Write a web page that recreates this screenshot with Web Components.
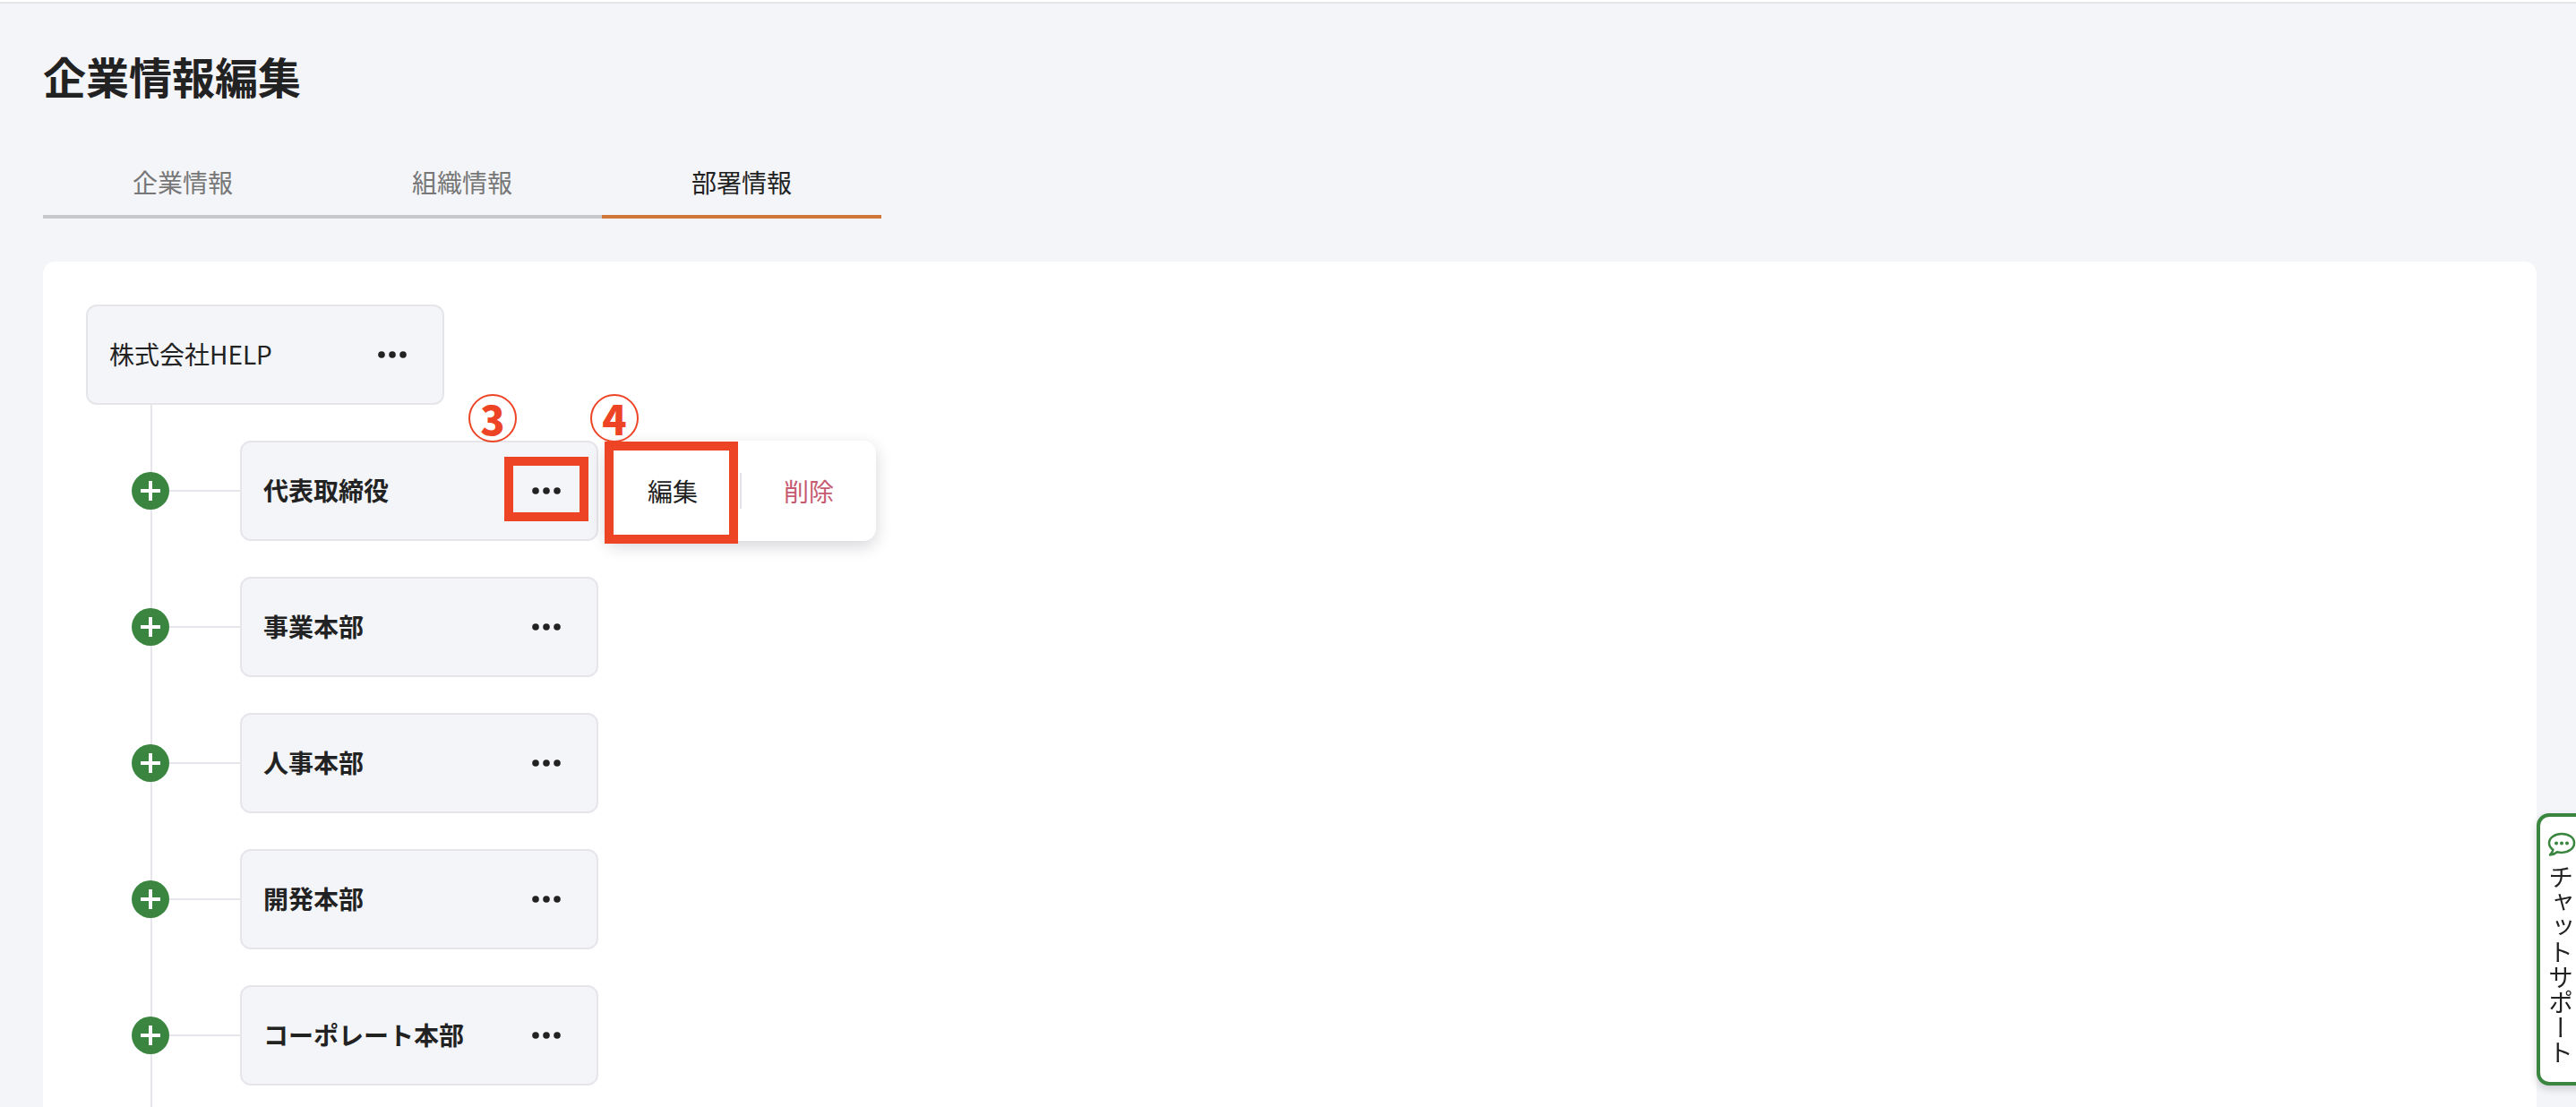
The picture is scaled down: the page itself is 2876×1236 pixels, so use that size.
<!DOCTYPE html>
<html lang="ja">
<head>
<meta charset="utf-8">
<title>企業情報編集</title>
<style>
  html, body { margin: 0; height: 100%; overflow: hidden; }
  body {
    background: #f4f5f9;
    color: #222;
    font-family: "Noto Sans CJK JP", "Noto Sans", sans-serif;
    border-top: 2px solid #fff;
    box-sizing: border-box;
  }
</style>
</head>
<body>

<company-edit-page heading="企業情報編集">
  <tab-bar slot="tabs">
    <tab-item>企業情報</tab-item>
    <tab-item>組織情報</tab-item>
    <tab-item active>部署情報</tab-item>
  </tab-bar>

  <dept-tree root="株式会社HELP">
    <dept-row>
      代表取締役
      <mark-box slot="marks" style="left:293px;top:16px;width:94px;height:72px"></mark-box>
      <mark-number slot="marks" style="left:253px;top:-54px">3</mark-number>
      <action-menu slot="marks"></action-menu>
      <mark-number slot="marks" style="left:389px;top:-54px">4</mark-number>
    </dept-row>
    <dept-row>事業本部</dept-row>
    <dept-row>人事本部</dept-row>
    <dept-row>開発本部</dept-row>
    <dept-row>コーポレート本部</dept-row>
  </dept-tree>
</company-edit-page>

<chat-support>チャットサポート</chat-support>

<script>
const dotsIcon = `
  <svg width="32" height="8" viewBox="0 0 32 8" fill="#222" aria-hidden="true">
    <circle cx="4" cy="4" r="3.8"/><circle cx="16" cy="4" r="3.8"/><circle cx="28" cy="4" r="3.8"/>
  </svg>`;

// Page shell: title, tabs and the white card
class CompanyEditPage extends HTMLElement {
  constructor() {
    super();
    this.attachShadow({ mode: 'open' });
  }
  connectedCallback() {
    this.shadowRoot.innerHTML = `
      <style>
        :host {
          display: flex; flex-direction: column; box-sizing: border-box; height: 100%;
          border-top: 2px solid #e6e6ea; padding: 44px 44px 0 48px;
        }
        h1 { margin: 0 0 63px; font-size: 48px; line-height: 72px; font-weight: 700; color: #222; }
        .card {
          flex: 1; min-height: 0; overflow: hidden;
          margin-top: 48px; padding: 48px 48px 0;
          background: #fff; border-radius: 14px 14px 0 0;
        }
      </style>
      <h1>${this.getAttribute('heading')}</h1>
      <slot name="tabs"></slot>
      <div class="card"><slot></slot></div>
    `;
  }
}

class TabBar extends HTMLElement {
  constructor() {
    super();
    this.attachShadow({ mode: 'open' });
    this.shadowRoot.innerHTML = `
      <style>:host { display: flex; }</style>
      <slot></slot>
    `;
  }
}

class TabItem extends HTMLElement {
  constructor() {
    super();
    this.attachShadow({ mode: 'open' });
    this.shadowRoot.innerHTML = `
      <style>
        :host {
          display: block; width: 312px; text-align: center;
          font-size: 28px; line-height: 40px; padding-bottom: 17px;
          color: #777; border-bottom: 4px solid #c8c8cc;
        }
        :host([active]) { color: #222; border-bottom-color: #d2773a; }
      </style>
      <slot></slot>
    `;
  }
}

// Root node plus the list hanging off the vertical line
class DeptTree extends HTMLElement {
  constructor() {
    super();
    this.attachShadow({ mode: 'open' });
  }
  connectedCallback() {
    this.shadowRoot.innerHTML = `
      <style>
        :host { display: block; }
        .root {
          display: flex; align-items: center; justify-content: space-between;
          box-sizing: border-box; width: 400px; height: 112px;
          padding: 0 40px 0 24px;
          background: #f4f5f9; border: 2px solid #e6e6ea; border-radius: 12px;
          font-size: 28px; color: #222;
        }
        .root svg { display: block; }
        .root span { padding-bottom: 2px; }
        .list {
          margin-left: 72px; border-left: 2px solid #e6e6ea;
          padding: 40px 0 60px;
          display: flex; flex-direction: column; gap: 40px;
        }
      </style>
      <div class="root"><span>${this.getAttribute('root')}</span>${dotsIcon}</div>
      <div class="list"><slot></slot></div>
    `;
  }
}

class DeptRow extends HTMLElement {
  constructor() {
    super();
    this.attachShadow({ mode: 'open' });
    this.shadowRoot.innerHTML = `
      <style>
        :host { display: flex; align-items: center; margin-left: -23px; }
        .add { display: block; flex: none; }
        .line { flex: none; width: 79px; height: 2px; background: #e6e6ea; }
        .node {
          position: relative;
          display: flex; align-items: center; justify-content: space-between;
          box-sizing: border-box; width: 400px; height: 112px;
          padding: 0 40px 0 24px;
          background: #f4f5f9; border: 2px solid #e6e6ea; border-radius: 12px;
          font-size: 28px; font-weight: 700; color: #222;
        }
        .node > span { padding-bottom: 2px; }
        .node > svg { display: block; }
      </style>
      <svg class="add" width="42" height="42" viewBox="0 0 42 42" aria-hidden="true">
        <circle cx="21" cy="21" r="21" fill="#3a853f"/>
        <path d="M10 21h22M21 10v22" stroke="#fff" stroke-width="4"/>
      </svg>
      <div class="line"></div>
      <div class="node">
        <span><slot></slot></span>
        ${dotsIcon}
        <slot name="marks"></slot>
      </div>
    `;
  }
}

// Edit / delete popup next to the first node
class ActionMenu extends HTMLElement {
  constructor() {
    super();
    this.attachShadow({ mode: 'open' });
    this.shadowRoot.innerHTML = `
      <style>
        :host {
          position: absolute; left: 406px; top: -2px;
          display: flex; align-items: center;
          width: 302px; height: 112px;
          background: #fff; border-radius: 14px;
          box-shadow: 0 6px 18px rgba(30, 30, 50, .18);
          font-size: 28px; font-weight: 400;
        }
        .item { position: relative; width: 150px; text-align: center; color: #222; }
        .item.delete { color: #c65a70; }
        .sep { flex: none; width: 2px; height: 40px; background: #e2e2e8; }
        .frame {
          position: absolute; left: -1px; top: 1px; width: 149px; height: 114px;
          box-sizing: border-box; border: 10px solid #ee4426;
        }
      </style>
      <div class="item">編集</div>
      <div class="sep"></div>
      <div class="item delete">削除</div>
      <div class="frame"></div>
    `;
  }
}

class MarkBox extends HTMLElement {
  constructor() {
    super();
    this.attachShadow({ mode: 'open' });
    this.shadowRoot.innerHTML = `
      <style>
        :host { position: absolute; box-sizing: border-box; border: 10px solid #ee4426; }
      </style>
    `;
  }
}

// Circled annotation number: thin ring with a heavy digit
class MarkNumber extends HTMLElement {
  constructor() {
    super();
    this.attachShadow({ mode: 'open' });
    this.shadowRoot.innerHTML = `
      <style>
        :host {
          position: absolute; z-index: 2;
          display: flex; align-items: center; justify-content: center;
          box-sizing: border-box; width: 54px; height: 54px;
          border: 2px solid #ee4426; border-radius: 50%;
          font-size: 45px; line-height: 50px; font-weight: 900; color: #ee4426;
        }
      </style>
      <slot></slot>
    `;
  }
}

class ChatSupport extends HTMLElement {
  constructor() {
    super();
    this.attachShadow({ mode: 'open' });
    this.shadowRoot.innerHTML = `
      <style>
        :host {
          position: fixed; left: 2832px; top: 908px;
          box-sizing: border-box; width: 64px; height: 304px;
          padding: 17px 0 0 8px;
          background: #fff; border: 4px solid #3a853f; border-radius: 14px 0 0 14px;
          box-shadow: 0 4px 10px rgba(0, 0, 0, .16);
          color: #222; font-size: 28px;
        }
        svg { display: block; }
        .label { writing-mode: vertical-rl; margin: 8px 0 0 -1px; width: 32px; line-height: 32px; }
      </style>
      <svg width="32" height="28" viewBox="0 0 32 28" aria-hidden="true">
        <path d="M16 2C8.300 2 2 6.600 2 12.200c0 3 1.700 5.600 4.400 7.500-.4 2-1.600 4-3.400 5.800 3.200-.2 6-1.400 8-3.200 1.600.4 3.200.6 5 .6 7.700 0 14-4.600 14-10.700S23.700 2 16 2z" fill="#fff" stroke="#3a853f" stroke-width="2.500" stroke-linejoin="round"/>
        <circle cx="10" cy="12.500" r="2" fill="#3a853f"/><circle cx="16" cy="12.500" r="2" fill="#3a853f"/><circle cx="22" cy="12.500" r="2" fill="#3a853f"/>
      </svg>
      <div class="label"><slot></slot></div>
    `;
  }
}

customElements.define('company-edit-page', CompanyEditPage);
customElements.define('tab-bar', TabBar);
customElements.define('tab-item', TabItem);
customElements.define('dept-tree', DeptTree);
customElements.define('dept-row', DeptRow);
customElements.define('action-menu', ActionMenu);
customElements.define('mark-box', MarkBox);
customElements.define('mark-number', MarkNumber);
customElements.define('chat-support', ChatSupport);
</script>
</body>
</html>
